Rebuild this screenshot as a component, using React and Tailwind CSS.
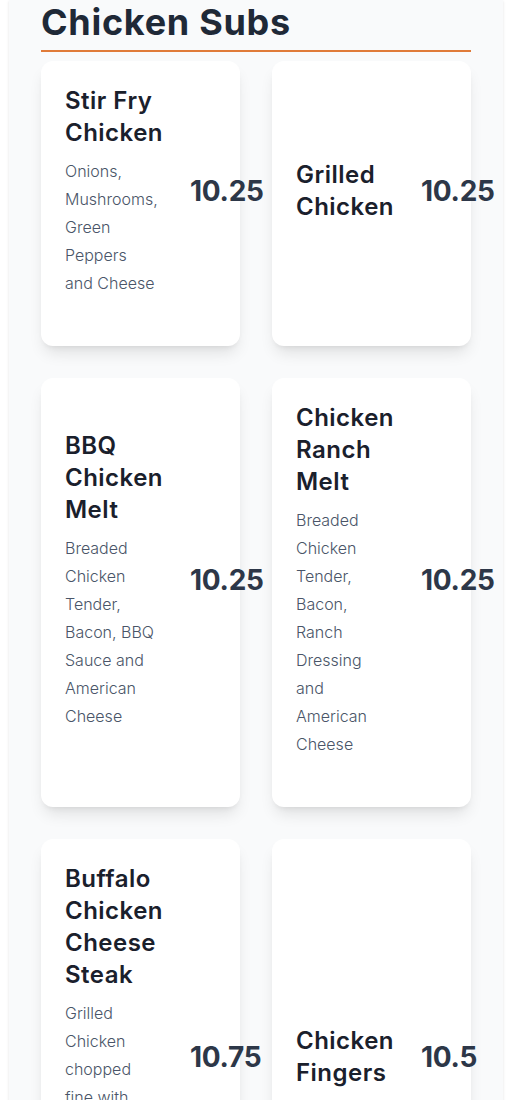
import React from 'react';

const items = [
  { name: 'Stir Fry Chicken', desc: 'Onions, Mushrooms, Green Peppers and Cheese', price: '10.25' },
  { name: 'Grilled Chicken', desc: '', price: '10.25' },
  { name: 'BBQ Chicken Melt', desc: 'Breaded Chicken Tender, Bacon, BBQ Sauce and American Cheese', price: '10.25' },
  { name: 'Chicken Ranch Melt', desc: 'Breaded Chicken Tender, Bacon, Ranch Dressing and American Cheese', price: '10.25' },
  { name: 'Buffalo Chicken Cheese Steak', desc: 'Grilled Chicken chopped fine with Onions, Buffalo Sauce and American Cheese', price: '10.75' },
  { name: 'Chicken Fingers', desc: '', price: '10.5' },
];

const MenuCard = ({ item }) => (
  <div className="bg-white rounded-xl shadow-lg pt-6 px-6 pb-[49px] flex">
    <div className="flex items-center w-full">
      <div className="w-[101px] shrink-0">
        <h3 className="text-2xl leading-8 font-semibold tracking-[0.02em] text-[#1a202c]">{item.name}</h3>
        {item.desc && (
          <p className="mt-2 max-w-[93px] text-base leading-7 font-light text-[#4a5568]">{item.desc}</p>
        )}
      </div>
      <span className="ml-6 shrink-0 whitespace-nowrap text-[28px] font-bold tracking-[-0.01em] text-[#2d3748]">
        {item.price}
      </span>
    </div>
  </div>
);

const App = () => {
  return (
    <div className="min-h-screen bg-white font-['Inter',sans-serif]">
      <div className="ml-[9px] w-[494px] bg-gray-50 shadow px-8 pb-8">
        <h2 className="pt-[2px] pb-2 text-4xl leading-10 font-bold tracking-[0.02em] text-[#1f2937] border-b-2 border-[#e07b39]">
          Chicken Subs
        </h2>
        <div className="mt-[9px] grid grid-cols-2 gap-8">
          {items.map(item => (
            <MenuCard key={item.name} item={item} />
          ))}
        </div>
      </div>
    </div>
  );
};

export default App;
